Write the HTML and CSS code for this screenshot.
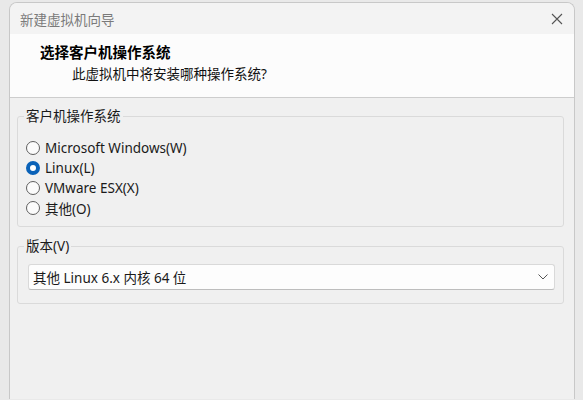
FILE: index.html
```html
<!DOCTYPE html>
<html>
<head>
  <meta charset="utf-8">
  <title>新建虚拟机向导</title>
  <link rel="stylesheet" href="styles.css">
</head>
<body>
  <div class="window">
    <div class="titlebar">
      <span class="title">新建虚拟机向导</span>
      <span class="close">
        <svg width="12" height="12" viewBox="0 0 12 12"><path d="M1 1L11 11M11 1L1 11" stroke="#555" stroke-width="1.1" fill="none"/></svg>
      </span>
    </div>

    <div class="header">
      <h1>选择客户机操作系统</h1>
      <p>此虚拟机中将安装哪种操作系统?</p>
    </div>

    <div class="content">
      <fieldset class="group">
        <legend>客户机操作系统</legend>
        <label class="radio"><span class="dot"></span>Microsoft Windows(W)</label>
        <label class="radio"><span class="dot checked"></span>Linux(L)</label>
        <label class="radio"><span class="dot"></span>VMware ESX(X)</label>
        <label class="radio"><span class="dot"></span>其他(O)</label>
      </fieldset>

      <fieldset class="group version">
        <legend>版本(V)</legend>
        <div class="select">
          <span>其他 Linux 6.x 内核 64 位</span>
          <svg width="10" height="6" viewBox="0 0 10 6"><path d="M0.5 0.5L5 5L9.5 0.5" stroke="#555" stroke-width="1" fill="none"/></svg>
        </div>
      </fieldset>
    </div>
  </div>
</body>
</html>
```

FILE: styles.css
```css
body {
  margin: 0;
  background: #e9e9e9;
  font-family: "Noto Sans", "Noto Sans CJK SC", sans-serif;
  font-size: 13.5px;
  color: #1a1a1a;
  overflow: hidden;
  height: 400px;
}
.window {
  margin: 2px 0 0 9px;
  width: 564px;
  height: 396px;
  border: 1px solid #c8c8c8;
  border-bottom: none;
  border-radius: 8px 8px 0 0;
  background: #f0f0f0;
  overflow: hidden;
}
.titlebar {
  height: 31px;
  background: #f3f3f3;
  display: flex;
  align-items: center;
  justify-content: space-between;
  padding: 0 11px 0 10px;
}
.title {
  color: #7a7a7a;
}
.close {
  display: flex;
}
.header {
  background: #fcfcfc;
  height: 64px;
  border-bottom: 1px solid #cdcdcd;
  padding-left: 30px;
  box-sizing: border-box;
}
.header h1 {
  margin: 0;
  padding-top: 8px;
  font-size: 14.5px;
  font-weight: 700;
  line-height: 20px;
  color: #000;
}
.header p {
  margin: 2px 0 0 32px;
  line-height: 20px;
  color: #111;
}
.content {
  padding: 0 10px 0 7px;
}
.group {
  margin: 8px 0 0;
  padding: 0 8px 8px 6px;
  border: 1px solid #dadada;
  border-radius: 3px;
}
.group legend {
  padding: 0 2px;
  line-height: 20px;
}
.radio {
  display: flex;
  align-items: center;
  height: 20px;
}
.group legend + .radio {
  margin-top: 12px;
}
.dot {
  width: 12px;
  height: 12px;
  border: 1px solid #5f5f5f;
  border-radius: 50%;
  background: #fbfbfb;
  margin: 0 5px 0 2px;
  box-sizing: content-box;
}
.dot.checked {
  width: 6px;
  height: 6px;
  border: 4px solid #0a62b8;
  background: #fff;
}
.version {
  margin-top: 9px;
  padding-bottom: 13px;
}
.select {
  margin: 8px 0 0 4px;
  height: 26px;
  box-sizing: border-box;
  background: #fdfdfd;
  border: 1px solid #d9d9d9;
  border-bottom-color: #bdbdbd;
  border-radius: 3px;
  display: flex;
  align-items: center;
  justify-content: space-between;
  padding: 0 6px 0 4px;
}
```
